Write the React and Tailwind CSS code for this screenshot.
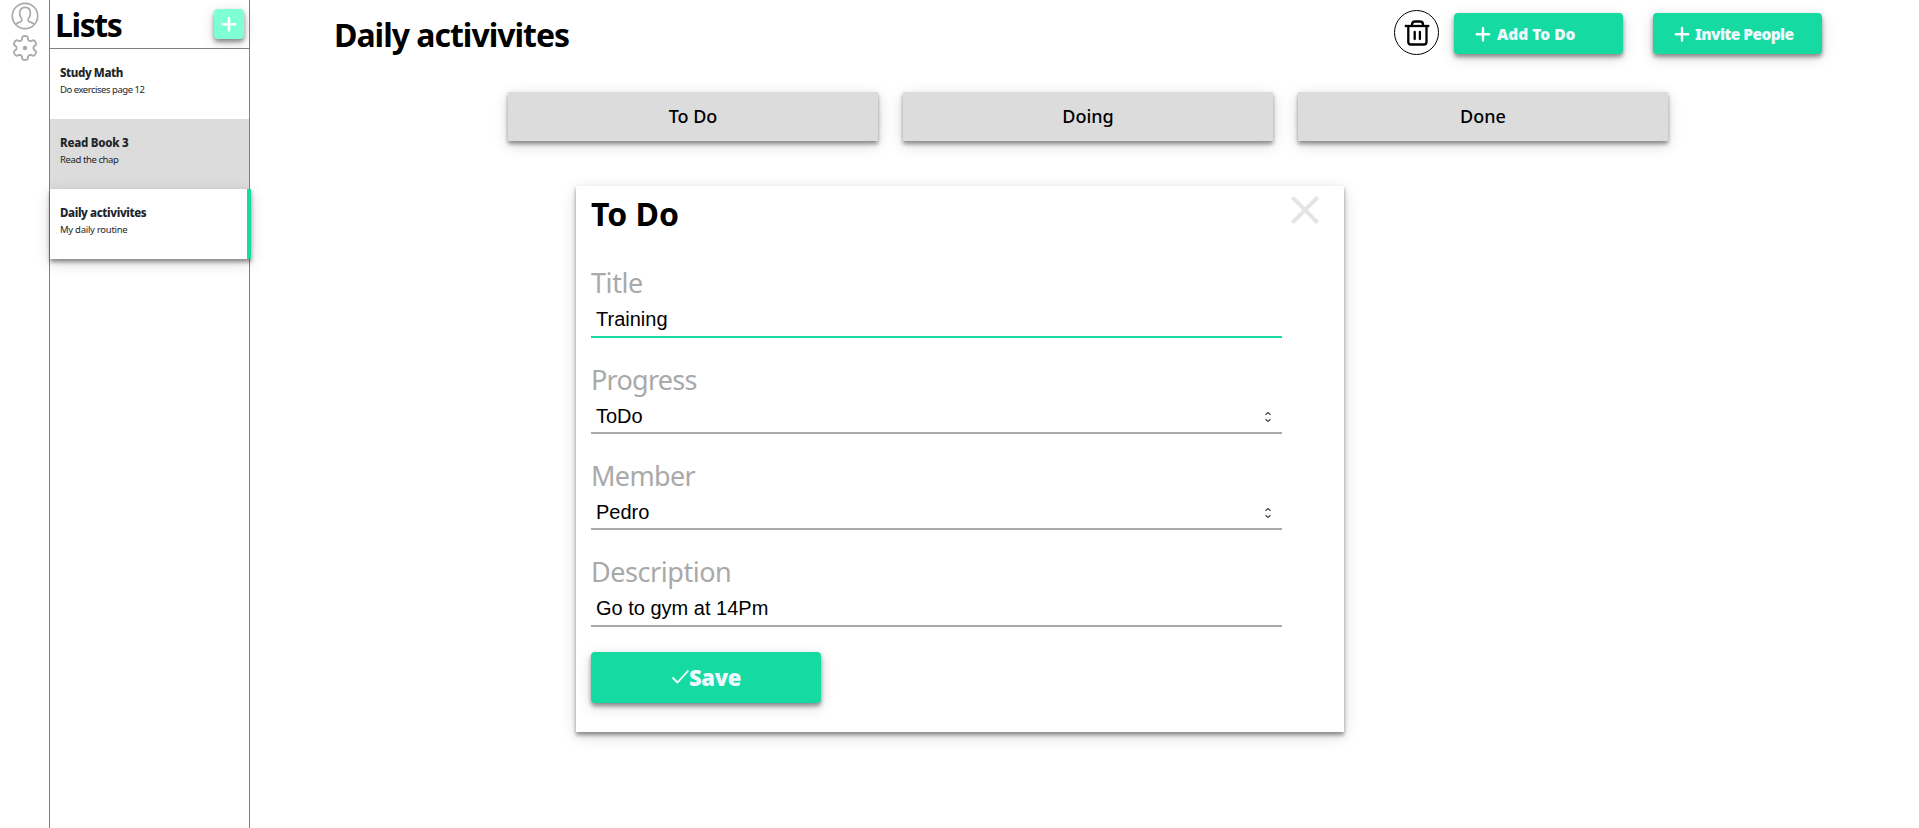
import React from "react";

const SHADOW = "shadow-[0_3px_4px_rgba(0,0,0,0.4),0_4px_14px_rgba(0,0,0,0.16)]";

function UserIcon() {
  return (
    <svg width="28" height="28" viewBox="0 0 28 28" fill="none" stroke="#a9a9a9" strokeWidth="1.7">
      <circle cx="14" cy="14" r="12.7" />
      <path d="M4.500 22.600c1.500-1.700 3.600-2.200 5.200-2.900 1.300-.6 1.400-2 .8-3.100C9.200 14.800 8.600 12.800 8.600 11c0-3.400 2.200-5.600 5.400-5.600s5.400 2.200 5.400 5.600c0 1.800-.6 3.800-1.900 5.600-.6 1.100-.5 2.500.8 3.100 1.600.7 3.700 1.200 5.200 2.900" />
    </svg>
  );
}

// Six-lobed outline: the radius swells at the top and every 60 degrees.
const GEAR_POINTS = Array.from({ length: 120 }, (_, i) => {
  const a = (i / 120) * Math.PI * 2;
  const c = Math.cos(6 * a);
  const r = 10.2 + 1.8 * Math.tanh(2.2 * (c + 0.15));
  return `${(13 + r * Math.sin(a)).toFixed(2)},${(13 - r * Math.cos(a)).toFixed(2)}`;
}).join(" ");

function GearIcon() {
  return (
    <svg width="26" height="26" viewBox="0 0 26 26" fill="none" stroke="#a9a9a9" strokeWidth="1.8" strokeLinejoin="round">
      <polygon points={GEAR_POINTS} />
      <circle cx="13" cy="13" r="2.2" fill="#a9a9a9" stroke="none" />
    </svg>
  );
}

function PlusIcon() {
  return (
    <svg className="shrink-0" width="16" height="16" viewBox="0 0 16 16" fill="none" stroke="#fff" strokeWidth="2.4" strokeLinecap="round">
      <path d="M8 2v12.400M1.800 8.200h12.400" />
    </svg>
  );
}

function TrashIcon() {
  return (
    <svg className="shrink-0" width="26" height="26" viewBox="0 0 26 26" fill="none" stroke="#000" strokeWidth="2.3" strokeLinejoin="round">
      <path d="M.8 6h24.500" />
      <path d="M8 6V4.500C8 2.600 9 1.500 11 1.500h5C18 1.500 19 2.600 19 4.500V6" />
      <path d="M4.300 6v16a2.500 2.500 0 0 0 2.500 2.500h13.200a2.500 2.500 0 0 0 2.500-2.500V6" />
      <path d="M10.700 12v7M15.900 12v7" strokeLinecap="round" />
    </svg>
  );
}

function Arrows() {
  return (
    <svg width="8" height="12" viewBox="0 0 8 12" fill="none" stroke="#444" strokeWidth="1.2">
      <path d="M1.500 3.800l2.500-2.300 2.500 2.300M1.500 8.200l2.500 2.300 2.500-2.300" />
    </svg>
  );
}

function ListItem({ title, text, className, titleClass, textClass }) {
  return (
    <div className={`h-[70px] shrink-0 pl-2.5 pt-[15px] text-[#212529] ${className}`}>
      <div className={`whitespace-nowrap text-[11.5px] leading-[17px] font-extrabold ${titleClass}`}>{title}</div>
      <div className={`whitespace-nowrap text-[9.5px] leading-[17px] ${textClass}`}>{text}</div>
    </div>
  );
}

function ActionButton({ label, labelClass }) {
  return (
    <button className={`flex h-[41px] w-[169px] items-center rounded-[4px] bg-[#15dba2] pl-[21px] font-black text-[#f0f8ff] ${SHADOW}`}>
      <PlusIcon />
      <span className={`mt-px whitespace-nowrap leading-[22px] ${labelClass}`}>{label}</span>
    </button>
  );
}

function Field({ label, value, select, active, labelClass, className }) {
  return (
    <div className={className}>
      <div className={`h-[38px] text-[27px] text-[#a9a9a9] ${labelClass}`}>{label}</div>
      <div className={`flex h-[35px] w-[691px] items-center justify-between border-b-2 pl-[5px] pr-[10px] font-['Liberation_Sans',sans-serif] text-[20px] text-black ${active ? "border-[#15dba2]" : "border-[#a9a9a9]"} ${select ? "pt-[2px]" : ""}`}>
        <span className="leading-[23px]">{value}</span>
        {select && <Arrows />}
      </div>
    </div>
  );
}

export default function App() {
  return (
    <div className="flex h-[828px] w-full overflow-hidden bg-white font-['Noto_Sans',sans-serif] text-black">
      <nav className="flex w-[49px] shrink-0 flex-col items-center gap-[5px] pl-px pt-[2px]">
        <UserIcon />
        <GearIcon />
      </nav>
      <aside className="flex w-[201px] shrink-0 flex-col border-x border-[#808080]">
        <header className="flex h-[49px] shrink-0 items-center justify-between border-b border-[#808080] px-[5px]">
          <h1 className="pt-px text-[32px] leading-[47px] font-bold tracking-[-1.4px]">Lists</h1>
          <button className={`flex size-[30px] items-center justify-center rounded-[4px] bg-[#7fffd4] ${SHADOW}`}>
            <PlusIcon />
          </button>
        </header>
        <ListItem title="Study Math" text="Do exercises page 12" titleClass="tracking-[-0.4px]" textClass="tracking-[-0.47px]" className="bg-white" />
        <ListItem title="Read Book 3" text="Read the chap" titleClass="tracking-[-0.25px]" textClass="tracking-[-0.4px]" className="bg-[#dcdcdc]" />
        <ListItem title="Daily activivites" text="My daily routine" titleClass="tracking-[-0.38px]" textClass="tracking-[-0.27px]" className={`relative w-[201px] border-r-4 border-[#15dba2] bg-white ${SHADOW}`} />
      </aside>
      <main className="flex flex-1 flex-col">
        <header className="flex h-[92px] items-start pl-[84px] pr-[97px]">
          <h1 className="mt-[11px] text-[32px] leading-[47px] font-bold tracking-[-1px]">Daily activivites</h1>
          <div className="ml-auto flex">
            <button className="mt-[10px] flex size-[45px] items-center justify-center rounded-full border border-black">
              <TrashIcon />
            </button>
            <div className="ml-[15px] mt-[13px] flex gap-[30px]">
              <ActionButton label="Add To Do" labelClass="ml-1.5 text-[15.5px]" />
              <ActionButton label="Invite People" labelClass="ml-[5px] text-[15.5px] tracking-[-0.6px]" />
            </div>
          </div>
        </header>
        <div className="ml-[258px] flex gap-[25px]">
          {["To Do", "Doing", "Done"].map((name) => (
            <div key={name} className={`flex h-[49px] w-[370px] items-center justify-center bg-[#dcdcdc] pb-px text-[18px] leading-[24px] font-medium ${SHADOW}`}>
              {name}
            </div>
          ))}
        </div>
        <section className={`ml-[326px] mt-[45px] h-[546px] w-[768px] bg-white pl-[15px] ${SHADOW}`}>
          <div className="flex h-[79px] items-start justify-between pr-[25px]">
            <h2 className="mt-1 text-[32px] leading-[47px] font-bold">To Do</h2>
            <svg className="mt-[10px]" width="28" height="28" viewBox="0 0 28 28" stroke="#e2e4e6" strokeWidth="4">
              <path d="M1.400 1.400l25.200 25.200M26.600 1.400L1.400 26.600" />
            </svg>
          </div>
          <Field label="Title" value="Training" active labelClass="leading-[35px] tracking-[-0.4px]" className="h-[96px]" />
          <Field label="Progress" value="ToDo" select labelClass="leading-[37px] tracking-[-0.75px]" className="h-[96px]" />
          <Field label="Member" value="Pedro" select labelClass="leading-[37px] tracking-[-0.65px]" className="h-[97px]" />
          <Field label="Description" value="Go to gym at 14Pm" labelClass="leading-[35px] tracking-[-0.45px]" className="h-[98px]" />
          <button className={`flex h-[51px] w-[230px] items-center justify-center rounded-[4px] bg-[#15dba2] pb-px text-[22px] leading-[30px] font-black text-[#f0f8ff] ${SHADOW}`}>
            <svg width="18" height="16" viewBox="0 0 18 16" fill="none" stroke="#fff" strokeWidth="1.8">
              <path d="M1.500 8.500l5 5L17.300 1.500" />
            </svg>
            <span className="tracking-[-0.3px]">Save</span>
          </button>
        </section>
      </main>
    </div>
  );
}
